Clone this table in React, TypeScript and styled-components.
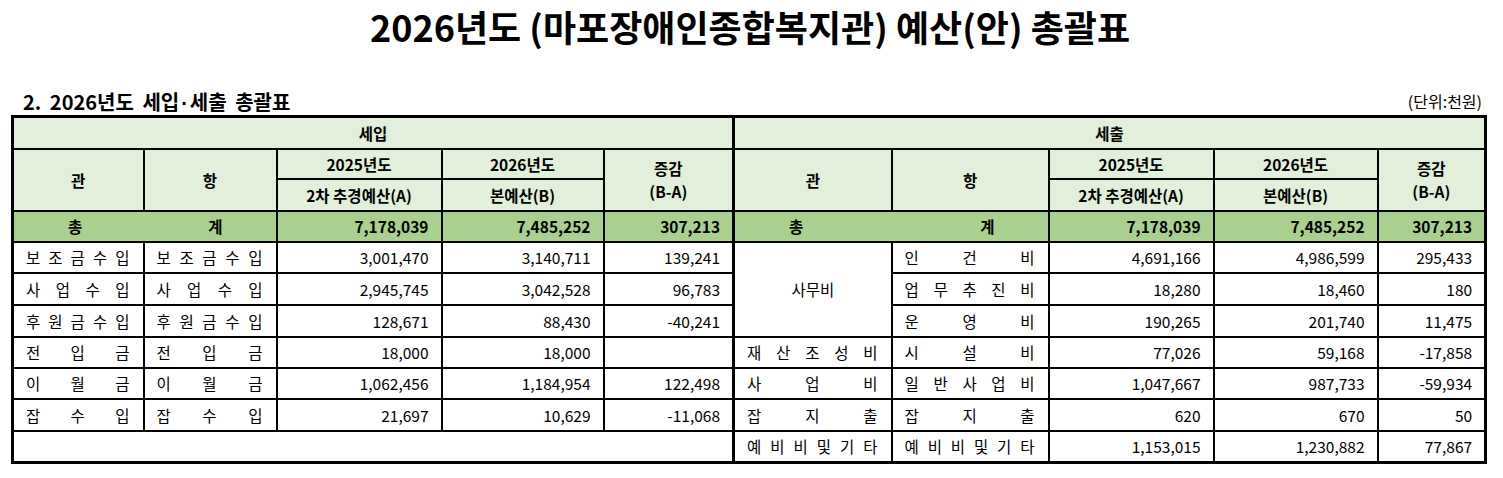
import React from "react";
import styled, { createGlobalStyle } from "styled-components";

const GlobalStyle = createGlobalStyle`
  body {
    margin: 0;
    background: #ffffff;
    font-family: "Noto Sans CJK KR", "Noto Sans", sans-serif;
    color: #000000;
  }
`;

type LeftRow = [string, string, string, string, string];

const incomeRows: LeftRow[] = [
  ["보조금수입", "보조금수입", "3,001,470", "3,140,711", "139,241"],
  ["사업수입", "사업수입", "2,945,745", "3,042,528", "96,783"],
  ["후원금수입", "후원금수입", "128,671", "88,430", "-40,241"],
  ["전입금", "전입금", "18,000", "18,000", ""],
  ["이월금", "이월금", "1,062,456", "1,184,954", "122,498"],
  ["잡수입", "잡수입", "21,697", "10,629", "-11,068"],
];

// 세출: 관이 null 이면 위 칸(사무비)에 합쳐짐
const expenseRows: Array<{ gwan: string | null; hang: string; a: string; b: string; diff: string }> = [
  { gwan: "사무비", hang: "인건비", a: "4,691,166", b: "4,986,599", diff: "295,433" },
  { gwan: null, hang: "업무추진비", a: "18,280", b: "18,460", diff: "180" },
  { gwan: null, hang: "운영비", a: "190,265", b: "201,740", diff: "11,475" },
  { gwan: "재산조성비", hang: "시설비", a: "77,026", b: "59,168", diff: "-17,858" },
  { gwan: "사업비", hang: "일반사업비", a: "1,047,667", b: "987,733", diff: "-59,934" },
  { gwan: "잡지출", hang: "잡지출", a: "620", b: "670", diff: "50" },
  { gwan: "예비비및기타", hang: "예비비및기타", a: "1,153,015", b: "1,230,882", diff: "77,867" },
];

const rowHeights = [31, 32, 32, 31, 31, 32, 32];

// 엑셀 균등분할 흉내
const Spread: React.FC<{ text: string }> = ({ text }) => (
  <SpreadBox>
    {text.split("").map((ch, i) => (
      <span key={i}>{ch}</span>
    ))}
  </SpreadBox>
);

const App: React.FC = () => {
  return (
    <>
      <GlobalStyle />
      <Page>
        <Title>2026년도 (마포장애인종합복지관) 예산(안) 총괄표</Title>
        <SubHead>
          <SubTitle>
            2. 2026년도 세입<Dot>·</Dot>세출 총괄표
          </SubTitle>
          <Unit>(단위:천원)</Unit>
        </SubHead>
        <Table>
          <colgroup>
            <col style={{ width: 131 }} />
            <col style={{ width: 133 }} />
            <col style={{ width: 165 }} />
            <col style={{ width: 162 }} />
            <col style={{ width: 130 }} />
            <col style={{ width: 158 }} />
            <col style={{ width: 157 }} />
            <col style={{ width: 165 }} />
            <col style={{ width: 164 }} />
            <col style={{ width: 108 }} />
          </colgroup>
          <tbody>
            <Row $h={32}>
              <Head colSpan={5} $split>
                세입
              </Head>
              <Head colSpan={5}>세출</Head>
            </Row>
            <Row $h={30}>
              <Head rowSpan={2}>관</Head>
              <Head rowSpan={2}>항</Head>
              <Head>2025년도</Head>
              <Head>2026년도</Head>
              <Head rowSpan={2} $split>
                <Lines>
                  <span>증감</span>
                  <span>(B-A)</span>
                </Lines>
              </Head>
              <Head rowSpan={2}>관</Head>
              <Head rowSpan={2}>항</Head>
              <Head>2025년도</Head>
              <Head>2026년도</Head>
              <Head rowSpan={2}>
                <Lines>
                  <span>증감</span>
                  <span>(B-A)</span>
                </Lines>
              </Head>
            </Row>
            <Row $h={32}>
              <Head>2차 추경예산(A)</Head>
              <Head>본예산(B)</Head>
              <Head>2차 추경예산(A)</Head>
              <Head>본예산(B)</Head>
            </Row>
            <Row $h={31}>
              <TotalCell colSpan={2}>
                <TotalLabel>
                  <span>총</span>
                  <span>계</span>
                </TotalLabel>
              </TotalCell>
              <TotalCell $num>7,178,039</TotalCell>
              <TotalCell $num>7,485,252</TotalCell>
              <TotalCell $num $split>
                307,213
              </TotalCell>
              <TotalCell colSpan={2}>
                <TotalLabel>
                  <span>총</span>
                  <span>계</span>
                </TotalLabel>
              </TotalCell>
              <TotalCell $num>7,178,039</TotalCell>
              <TotalCell $num>7,485,252</TotalCell>
              <TotalCell $num>307,213</TotalCell>
            </Row>
            {expenseRows.map((ex, i) => {
              const inc = incomeRows[i];
              return (
                <Row key={i} $h={rowHeights[i]}>
                  {inc ? (
                    <>
                      <Cell>
                        <Spread text={inc[0]} />
                      </Cell>
                      <Cell>
                        <Spread text={inc[1]} />
                      </Cell>
                      <Cell $num>{inc[2]}</Cell>
                      <Cell $num>{inc[3]}</Cell>
                      <Cell $num $split>
                        {inc[4]}
                      </Cell>
                    </>
                  ) : (
                    <Cell colSpan={5} $split />
                  )}
                  {ex.gwan === "사무비" ? (
                    <Cell rowSpan={3} $center>
                      {ex.gwan}
                    </Cell>
                  ) : ex.gwan ? (
                    <Cell>
                      <Spread text={ex.gwan} />
                    </Cell>
                  ) : null}
                  <Cell>
                    <Spread text={ex.hang} />
                  </Cell>
                  <Cell $num>{ex.a}</Cell>
                  <Cell $num>{ex.b}</Cell>
                  <Cell $num>{ex.diff}</Cell>
                </Row>
              );
            })}
          </tbody>
        </Table>
      </Page>
    </>
  );
};

const Page = styled.div`
  width: 1476px;
  padding-left: 11px;
`;

const Title = styled.h1`
  margin: 0;
  height: 52px;
  line-height: 52px;
  text-align: center;
  font-size: 36px;
  font-weight: 700;
  padding-left: 2px;
`;

const SubHead = styled.div`
  display: flex;
  justify-content: space-between;
  align-items: center;
  height: 26px;
  margin-top: 36px;
  margin-bottom: 1px;
`;

const SubTitle = styled.h2`
  margin: 0;
  padding-left: 12px;
  font-size: 20px;
  font-weight: 700;
  word-spacing: 4px;
`;

const Dot = styled.span`
  font-family: "Liberation Sans", sans-serif;
  margin: 0 2px;
`;

const Unit = styled.span`
  font-size: 16px;
  padding-right: 5px;
`;

const Table = styled.table`
  width: 1476px;
  table-layout: fixed;
  border-collapse: collapse;
  border: 3px solid #000;
  font-size: 15.5px;
`;

const Row = styled.tr<{ $h: number }>`
  height: ${(p) => p.$h}px;
`;

const Head = styled.td<{ $split?: boolean }>`
  background: #e2efda;
  border: 2px solid #000;
  border-right-width: ${(p) => (p.$split ? 3 : 2)}px;
  text-align: center;
  font-weight: 700;
  padding: 0;
  line-height: 20px;
`;

const Lines = styled.div`
  display: flex;
  flex-direction: column;
  align-items: center;
  line-height: 23px;
  padding-top: 1px;
`;

const TotalCell = styled.td<{ $num?: boolean; $split?: boolean }>`
  background: #a9d08e;
  border: 2px solid #000;
  border-right-width: ${(p) => (p.$split ? 3 : 2)}px;
  text-align: ${(p) => (p.$num ? "right" : "center")};
  padding: 0 ${(p) => (p.$num ? "12px" : "0")} 0 0;
  font-weight: 700;
`;

const TotalLabel = styled.div`
  display: flex;
  justify-content: space-between;
  padding: 0 53px 0 54px;
`;

const Cell = styled.td<{ $num?: boolean; $split?: boolean; $center?: boolean }>`
  border: 2px solid #000;
  border-right-width: ${(p) => (p.$split ? 3 : 2)}px;
  text-align: ${(p) => (p.$num ? "right" : "center")};
  padding: 0 ${(p) => (p.$num ? "12px" : "0")} 0 0;
  font-weight: 400;
  white-space: nowrap;
`;

const SpreadBox = styled.div`
  display: flex;
  justify-content: space-between;
  padding: 0 13px 0 12px;
`;

export default App;
